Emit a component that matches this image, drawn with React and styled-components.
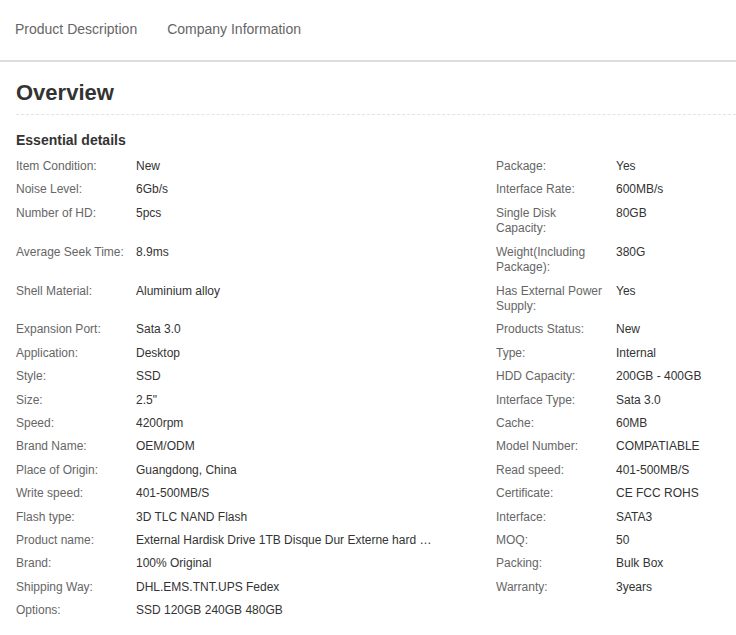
import React from "react";
import styled, { createGlobalStyle } from "styled-components";

const Global = createGlobalStyle`
  html, body { margin: 0; padding: 0; background: #fff; }
  body { font-family: Arial, "Liberation Sans", Helvetica, sans-serif; overflow-x: hidden; }
  * { box-sizing: border-box; }
`;

const Page = styled.div`
  width: 736px;
`;

const TabBar = styled.div`
  display: flex;
  height: 62px;
  align-items: center;
  gap: 30px;
  padding: 0 15px 2px;
  border-bottom: 2px solid #dcdcdc;
`;

const Tab = styled.div`
  font-size: 14px;
  color: #666;
  line-height: 20px;
`;

const Body = styled.div`
  padding: 0 0 0 16px;
`;

const Title = styled.h2`
  margin: 0;
  font-size: 22px;
  font-weight: bold;
  color: #333;
  line-height: 26px;
  padding: 18px 0 8px;
  border-bottom: 1px dashed #e3e3e3;
`;

const SubTitle = styled.h3`
  margin: 0;
  font-size: 14px;
  font-weight: bold;
  color: #333;
  line-height: 18px;
  padding: 16px 0 10px;
`;

const Row = styled.div`
  display: grid;
  grid-template-columns: 120px 360px 120px 1fr;
`;

const Label = styled.div`
  font-size: 12px;
  line-height: 15.5px;
  color: #666;
  padding: 0 12px 7.9px 0;
`;

const Value = styled.div`
  font-size: 12px;
  line-height: 15.5px;
  color: #333;
  padding: 0 0 7.9px 0;
  max-width: 298px;
  white-space: nowrap;
  overflow: hidden;
  text-overflow: ellipsis;
`;

const rows = [
  ["Item Condition:", "New", "Package:", "Yes"],
  ["Noise Level:", "6Gb/s", "Interface Rate:", "600MB/s"],
  ["Number of HD:", "5pcs", "Single Disk Capacity:", "80GB"],
  ["Average Seek Time:", "8.9ms", "Weight(Including Package):", "380G"],
  ["Shell Material:", "Aluminium alloy", "Has External Power Supply:", "Yes"],
  ["Expansion Port:", "Sata 3.0", "Products Status:", "New"],
  ["Application:", "Desktop", "Type:", "Internal"],
  ["Style:", "SSD", "HDD Capacity:", "200GB - 400GB"],
  ["Size:", "2.5\"", "Interface Type:", "Sata 3.0"],
  ["Speed:", "4200rpm", "Cache:", "60MB"],
  ["Brand Name:", "OEM/ODM", "Model Number:", "COMPATIABLE"],
  ["Place of Origin:", "Guangdong, China", "Read speed:", "401-500MB/S"],
  ["Write speed:", "401-500MB/S", "Certificate:", "CE FCC ROHS"],
  ["Flash type:", "3D TLC NAND Flash", "Interface:", "SATA3"],
  ["Product name:", "External Hardisk Drive 1TB Disque Dur Externe hard disk drive", "MOQ:", "50"],
  ["Brand:", "100% Original", "Packing:", "Bulk Box"],
  ["Shipping Way:", "DHL.EMS.TNT.UPS Fedex", "Warranty:", "3years"],
  ["Options:", "SSD 120GB 240GB 480GB", "", ""],
];

export default function App() {
  return (
    <Page>
      <Global />
      <TabBar>
        <Tab>Product Description</Tab>
        <Tab>Company Information</Tab>
      </TabBar>
      <Body>
        <Title>Overview</Title>
        <SubTitle>Essential details</SubTitle>
        {rows.map((r, i) => (
          <Row key={i}>
            <Label>{r[0]}</Label>
            <Value title={r[1]}>{r[1]}</Value>
            <Label>{r[2]}</Label>
            <Value>{r[3]}</Value>
          </Row>
        ))}
      </Body>
    </Page>
  );
}
